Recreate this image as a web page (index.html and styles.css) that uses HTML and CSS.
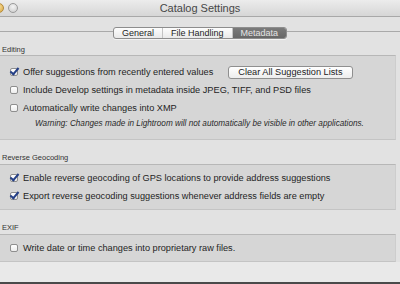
FILE: index.html
```html
<!DOCTYPE html>
<html lang="en">
<head>
    <meta charset="UTF-8">
    <title>Catalog Settings</title>
    <link rel="stylesheet" href="styles.css">
</head>
<body>
    <div class="window">
        <header class="titlebar">
            <div class="lights">
                <span class="light light-min"></span>
                <span class="light light-max"></span>
            </div>
            <h1>Catalog Settings</h1>
        </header>

        <nav class="tabbar">
            <div class="tabs">
                <button class="tab">General</button>
                <button class="tab">File Handling</button>
                <button class="tab active">Metadata</button>
            </div>
        </nav>

        <section class="section">
            <h2 class="section-label">Editing</h2>
            <div class="group group-editing">
                <div class="row">
                    <label class="check"><span class="box checked"></span>Offer suggestions from recently entered values</label>
                    <button class="btn">Clear All Suggestion Lists</button>
                </div>
                <div class="row">
                    <label class="check"><span class="box"></span>Include Develop settings in metadata inside JPEG, TIFF, and PSD files</label>
                </div>
                <div class="row">
                    <label class="check"><span class="box"></span>Automatically write changes into XMP</label>
                </div>
                <p class="warning">Warning: Changes made in Lightroom will not automatically be visible in other applications.</p>
            </div>
        </section>

        <section class="section">
            <h2 class="section-label">Reverse Geocoding</h2>
            <div class="group">
                <div class="row">
                    <label class="check"><span class="box checked"></span>Enable reverse geocoding of GPS locations to provide address suggestions</label>
                </div>
                <div class="row">
                    <label class="check"><span class="box checked"></span>Export reverse geocoding suggestions whenever address fields are empty</label>
                </div>
            </div>
        </section>

        <section class="section">
            <h2 class="section-label">EXIF</h2>
            <div class="group">
                <div class="row">
                    <label class="check"><span class="box"></span>Write date or time changes into proprietary raw files.</label>
                </div>
            </div>
        </section>

        <footer class="footer"></footer>
    </div>
</body>
</html>
```

FILE: styles.css
```css
:root {
    --bg-color: #e2e2e2;
    --group-color: #d6d6d6;
    --line-color: #b7b7b7;
    --text-color: #242424;
    --check-color: #243f86;
}

* {
    margin: 0;
    padding: 0;
    box-sizing: border-box;
    font-family: 'Liberation Sans', Arial, sans-serif;
}

body {
    width: 400px;
    height: 284px;
    overflow: hidden;
    background-color: var(--bg-color);
    color: var(--text-color);
}

.window {
    height: 284px;
    display: flex;
    flex-direction: column;
}

/* Title bar */
.titlebar {
    height: 17px;
    position: relative;
    display: flex;
    align-items: center;
    justify-content: center;
    background: linear-gradient(#ececec, #d6d6d6);
    border-bottom: 1px solid #a8a8a8;
}

.titlebar h1 {
    font-size: 11px;
    font-weight: normal;
    color: #474747;
}

.lights {
    position: absolute;
    left: -6px;
    top: 3px;
    display: flex;
    gap: 4px;
}

.light {
    width: 10px;
    height: 10px;
    border-radius: 50%;
    border: 1px solid #9a9a9a;
    background: radial-gradient(circle at 50% 35%, #f4f4f4, #c9c9c9);
}

.light-min {
    border-color: #b48a3a;
    background: radial-gradient(circle at 50% 35%, #f6dc98, #d8a53e);
}

/* Tabs */
.tabbar {
    height: 23px;
    padding-top: 10px;
    display: flex;
    justify-content: center;
    align-items: flex-start;
    background: linear-gradient(to bottom, transparent 14px, #a9a9a9 14px, #a9a9a9 15px, transparent 15px);
}

.tabs {
    display: flex;
    height: 12px;
    border: 1px solid #8d8d8d;
    border-radius: 3px;
    overflow: hidden;
    background: linear-gradient(#fdfdfd, #e9e9e9);
    box-shadow: 0 1px 0 rgba(255,255,255,0.6);
}

.tab {
    border: none;
    background: none;
    padding: 0 8px;
    font-size: 9px;
    line-height: 10px;
    color: #1e1e1e;
    border-right: 1px solid #c3c3c3;
}

.tab:last-child {
    border-right: none;
}

.tab.active {
    background: linear-gradient(#7a7a7a, #676767);
    color: #e4e4e4;
}

/* Sections */
.section-label {
    font-size: 7.5px;
    font-weight: normal;
    color: #333;
    padding-left: 2px;
    height: 24px;
    line-height: 8px;
    padding-top: 14px;
}

.section:first-of-type .section-label {
    height: 15px;
    padding-top: 6px;
}

.group {
    margin-right: 4px;
    background-color: var(--group-color);
    border-top: 1px solid var(--line-color);
    border-bottom: 1px solid #c4c4c4;
    border-right: 1px solid #cdcdcd;
    padding: 4px 0 4px 10px;
}

.group-editing {
    padding-top: 7px;
    padding-bottom: 8px;
}

.row {
    height: 18px;
    display: flex;
    align-items: center;
}

.check {
    display: flex;
    align-items: center;
    gap: 5px;
    font-size: 9.2px;
    color: var(--text-color);
    white-space: nowrap;
}

.box {
    width: 8px;
    height: 8px;
    border: 1px solid #8e8e8e;
    border-radius: 2px;
    background: linear-gradient(#ffffff, #ececec);
    position: relative;
}

.box.checked::after {
    content: '';
    position: absolute;
    left: 1px;
    top: -3px;
    width: 3px;
    height: 7px;
    border-right: 2px solid var(--check-color);
    border-bottom: 2px solid var(--check-color);
    transform: rotate(40deg);
}

.btn {
    margin-left: 15px;
    height: 13px;
    padding: 0 9px;
    font-size: 9.2px;
    color: #222;
    border: 1px solid #8f8f8f;
    border-radius: 3px;
    background: linear-gradient(#ffffff, #ededed);
}

.warning {
    padding-left: 25px;
    height: 14px;
    line-height: 14px;
    font-size: 8.2px;
    font-style: italic;
    color: #2a2a2a;
    white-space: nowrap;
}

.footer {
    flex-grow: 1;
    background-color: #e9e9e9;
    border-bottom: 2px solid #4a4a4a;
}
```
